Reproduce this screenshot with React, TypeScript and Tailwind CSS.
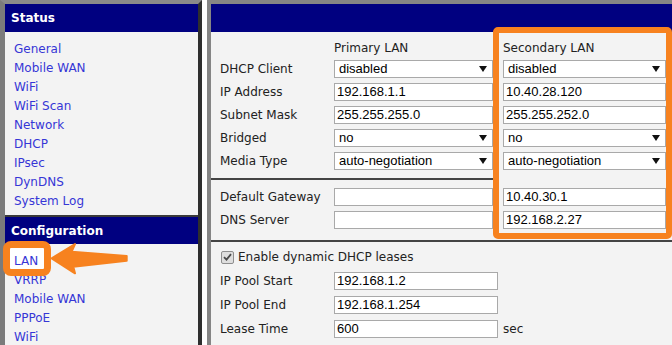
import React from "react";

const statusLinks = ["General", "Mobile WAN", "WiFi", "WiFi Scan", "Network", "DHCP", "IPsec", "DynDNS", "System Log"];
const configLinks = ["LAN", "VRRP", "Mobile WAN", "PPPoE", "WiFi"];

const Arrow: React.FC = () => (
  <svg width="8" height="6" viewBox="0 0 8 6" className="shrink-0">
    <polygon points="0,0 8,0 4,6" fill="#111" />
  </svg>
);

const Select: React.FC<{ value: string }> = ({ value }) => (
  <div className="flex h-[18px] w-full items-center justify-between border border-[#a9a9a9] bg-white pl-[4px] pr-[5px] font-['Liberation_Sans',sans-serif] text-[13px] leading-[16px] text-black">
    <span>{value}</span>
    <Arrow />
  </div>
);

const Input: React.FC<{ value?: string }> = ({ value }) => (
  <div className="h-[18px] w-full border border-[#a9a9a9] bg-white pl-[2px] font-['Liberation_Sans',sans-serif] text-[13px] leading-[16px] text-black">
    {value}
  </div>
);

const Row: React.FC<{ label?: string; children?: React.ReactNode }> = ({ label, children }) => (
  <div className="flex h-[23px] items-center">
    <div className="w-[114px] shrink-0 text-[#222]">{label}</div>
    <div className="w-[159px] shrink-0">{children}</div>
  </div>
);

const Cell: React.FC<{ children?: React.ReactNode }> = ({ children }) => (
  <div className="flex h-[23px] w-[163px] items-center">{children}</div>
);

const SideHeader: React.FC<{ title: string; h: string }> = ({ title, h }) => (
  <div className={`flex items-center bg-[#000080] pl-[6px] font-bold text-white ${h}`}>{title}</div>
);

const App: React.FC = () => {
  return (
    <div className="relative flex h-[345px] w-[672px] overflow-hidden bg-white font-['DejaVu_Sans',sans-serif] text-[12px]">
      {/* sidebar */}
      <aside className="w-[202px] shrink-0 border-t-[4px] border-r-[4px] border-l-[5px] border-t-[#8a8a8a] border-r-[#2e2e2e] border-l-[#7b7b7b] bg-[#f3f3f3]">
        <SideHeader title="Status" h="h-[28px]" />
        <ul className="pt-[8px] pb-[4px] pl-[9px] leading-[19px] text-[#3636d6]">
          {statusLinks.map((l) => (
            <li key={l}>{l}</li>
          ))}
        </ul>
        <div className="h-[2px] bg-[#3a3a3a]" />
        <SideHeader title="Configuration" h="h-[27px]" />
        <ul className="pt-[8px] pl-[9px] leading-[19px] text-[#3636d6]">
          {configLinks.map((l) => (
            <li key={l} className={l === "LAN" ? "relative z-10" : ""}>
              {l}
            </li>
          ))}
        </ul>
      </aside>

      {/* main */}
      <main className="ml-[5px] flex-1 border-t-[4px] border-l-[4px] border-[#858585] bg-[#f3f3f3]">
        <div className="h-[28px] bg-[#000080]" />
        <div className="flex items-start">
          <div className="w-[282px] shrink-0 pl-[9px]">
            <div className="h-[146px] pt-[6px]">
              <div className="flex h-[19px] items-center">
                <div className="w-[114px]" />
                <div className="text-[#222]">Primary LAN</div>
              </div>
              <Row label="DHCP Client"><Select value="disabled" /></Row>
              <Row label="IP Address"><Input value="192.168.1.1" /></Row>
              <Row label="Subnet Mask"><Input value="255.255.255.0" /></Row>
              <Row label="Bridged"><Select value="no" /></Row>
              <Row label="Media Type"><Select value="auto-negotiation" /></Row>
            </div>
            <div className="-ml-[9px] h-[2px] bg-[#444]" />
            <div className="h-[60px] pt-[5px]">
              <Row label="Default Gateway"><Input /></Row>
              <Row label="DNS Server"><Input /></Row>
            </div>
          </div>
          <div className="relative z-10 -mt-[5px] h-[212px] w-[179px] shrink-0 rounded-[5px] border-[6px] border-[#f7821f] pt-[5px] pl-[4px]">
            <div className="flex h-[19px] items-center text-[#222]">Secondary LAN</div>
            <Cell><Select value="disabled" /></Cell>
            <Cell><Input value="10.40.28.120" /></Cell>
            <Cell><Input value="255.255.252.0" /></Cell>
            <Cell><Select value="no" /></Cell>
            <Cell><Select value="auto-negotiation" /></Cell>
            <div className="h-[13px]" />
            <Cell><Input value="10.40.30.1" /></Cell>
            <Cell><Input value="192.168.2.27" /></Cell>
          </div>
        </div>
        <div className="h-[2px] bg-[#444]" />
        <div className="pt-[3px] pl-[9px] text-[#222]">
          <div className="flex h-[24px] items-center gap-[4px] pl-[1px]">
            <span className="flex h-[13px] w-[13px] items-center justify-center rounded-[2px] border border-[#8e8e8e] bg-[#dedede]">
              <svg width="9" height="8" viewBox="0 0 9 8">
                <path d="M1 4.2 L3.5 6.6 L8 1.2" stroke="#4a4a4a" strokeWidth="1.8" fill="none" />
              </svg>
            </span>
            <span>Enable dynamic DHCP leases</span>
          </div>
          {[
            ["IP Pool Start", "192.168.1.2", ""],
            ["IP Pool End", "192.168.1.254", ""],
            ["Lease Time", "600", "sec"],
          ].map(([l, v, s]) => (
            <div key={l} className="flex h-[24px] items-center">
              <div className="w-[114px] shrink-0">{l}</div>
              <div className="w-[164px] shrink-0"><Input value={v} /></div>
              <span className="ml-[5px]">{s}</span>
            </div>
          ))}
        </div>
      </main>

      {/* annotation: LAN highlight + arrow */}
      <div className="absolute top-[241px] left-[3px] z-0 h-[35px] w-[48px] rounded-[8px] border-[7px] border-[#f7821f] bg-white" />
      <svg className="absolute top-[238px] left-[48px] z-0" width="84" height="40" viewBox="0 0 84 40">
        <polygon
          points="3.7,20.3 27,6 23.7,13.7 78.7,18 78.7,22.7 25.3,28.7 27,35.3"
          fill="#f7821f"
          stroke="#f7821f"
          strokeWidth="2"
          strokeLinejoin="round"
        />
      </svg>
    </div>
  );
};

export default App;
